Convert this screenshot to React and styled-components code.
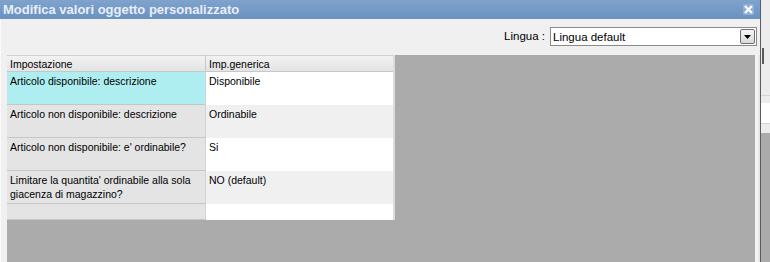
import React from "react";
import styled, { createGlobalStyle } from "styled-components";

const Global = createGlobalStyle`
  html, body { margin: 0; padding: 0; }
  body {
    width: 770px;
    height: 262px;
    overflow: hidden;
    background: #f0f0f0;
    font-family: "Liberation Sans", Arial, sans-serif;
    font-size: 11px;
    color: #000;
  }
`;

const Screen = styled.div`
  display: flex;
  width: 770px;
  height: 262px;
  overflow: hidden;
`;

const Dialog = styled.div`
  width: 760px;
  display: flex;
  flex-direction: column;
  border-right: 1px solid #5c5c5c;
  background: #f0f0f0;
`;

const TitleBar = styled.div`
  height: 19px;
  flex: none;
  display: flex;
  align-items: center;
  justify-content: space-between;
  padding: 0 6px 0 3px;
  background: linear-gradient(#7fa3cd, #6a91bf);
`;

const Title = styled.span`
  font-family: "Liberation Sans", Arial, sans-serif;
  font-size: 13px;
  font-weight: bold;
  color: #e9eff7;
  line-height: 19px;
`;

const CloseButton = styled.div`
  width: 11px;
  height: 11px;
  display: flex;
  align-items: center;
  justify-content: center;
  background: #8fb0d6;
`;

const Content = styled.div`
  flex: 1;
  display: flex;
  flex-direction: column;
  padding-left: 6px;
  border-left: 1px solid #fafafa;
`;

const Toolbar = styled.div`
  height: 36px;
  flex: none;
  display: flex;
  justify-content: flex-end;
  align-items: flex-start;
  gap: 5px;
  padding: 8px 3px 0 0;
  box-sizing: border-box;
`;

const Label = styled.span`
  line-height: 19px;
  font-size: 11.5px;
`;

const Select = styled.div`
  width: 207px;
  height: 19px;
  box-sizing: border-box;
  border: 1px solid #8a8a8a;
  background: #fff;
  display: flex;
  align-items: center;
  justify-content: space-between;
  padding: 0 1px 0 2px;
  font-size: 11.5px;
`;

const DropButton = styled.div`
  width: 15px;
  height: 15px;
  box-sizing: border-box;
  border: 1px solid #6f6f6f;
  border-radius: 2px;
  background: linear-gradient(#f6f6f6, #d9d9d9);
  display: flex;
  align-items: center;
  justify-content: center;
`;

const Body = styled.div`
  flex: 1;
  display: flex;
`;

const GridArea = styled.div`
  flex: 1;
  background: #ababab;
  display: flex;
  align-items: flex-start;
`;

const RightGutter = styled.div`
  width: 5px;
  background: linear-gradient(90deg, #f3f3f8 0, #f3f3f8 3px, #e6e6e6 3px);
`;

const Table = styled.div`
  display: grid;
  grid-template-columns: 199px 187px;
  grid-template-rows: 17px repeat(4, 33px) 16px;
  border-right: 2px solid #dcdcdc;
  font-size: 10.5px;
`;

const HeadCell = styled.div`
  box-sizing: border-box;
  background: linear-gradient(#f2f2f2, #e4e4e4);
  border-top: 1px solid #d0d0d0;
  border-bottom: 1px solid #c8c8c8;
  border-right: ${(p) => (p.$first ? "1px solid #c8c8c8" : "none")};
  padding: 1px 3px 0;
  line-height: 14px;
  white-space: nowrap;
`;

const KeyCell = styled.div`
  box-sizing: border-box;
  background: ${(p) => (p.$selected ? "#aeeef0" : "#e4e4e4")};
  border-bottom: 1px solid #c6c6c6;
  border-right: 1px solid #d2d2d2;
  padding: 2px 3px 0;
  line-height: 14px;
`;

const ValueCell = styled.div`
  box-sizing: border-box;
  background: ${(p) => (p.$alt ? "#f0f0f0" : "#ffffff")};
  padding: 2px 3px 0;
  line-height: 14px;
`;

const SideStrip = styled.div`
  flex: 1;
  display: flex;
  flex-direction: column;
  background: #ececec;
`;

const StripBlock = styled.div`
  height: ${(p) => p.$h}px;
  flex: ${(p) => (p.$grow ? 1 : "none")};
  background: ${(p) => p.$bg || "transparent"};
  border-bottom: ${(p) => (p.$line ? "1px solid #d4d4d4" : "none")};
  border-left: ${(p) => (p.$thumb ? "2px solid #5a5a5a" : "none")};
  margin-left: ${(p) => (p.$thumb ? "1px" : "0")};
`;

const rows = [
  { key: "Articolo disponibile: descrizione", value: "Disponibile" },
  { key: "Articolo non disponibile: descrizione", value: "Ordinabile" },
  { key: "Articolo non disponibile: e' ordinabile?", value: "Si" },
  {
    key: "Limitare la quantita' ordinabile alla sola giacenza di magazzino?",
    value: "NO (default)",
  },
  { key: "", value: "" },
];

export default function App() {
  return (
    <>
      <Global />
      <Screen>
        <Dialog>
          <TitleBar>
            <Title>Modifica valori oggetto personalizzato</Title>
            <CloseButton>
              <svg width="9" height="9" viewBox="0 0 9 9">
                <path d="M1 1 L8 8 M8 1 L1 8" stroke="#fff" strokeWidth="2.2" />
              </svg>
            </CloseButton>
          </TitleBar>
          <Content>
            <Toolbar>
              <Label>Lingua :</Label>
              <Select>
                <span>Lingua default</span>
                <DropButton>
                  <svg width="7" height="4" viewBox="0 0 7 4">
                    <path d="M0 0 H7 L3.5 4 Z" fill="#000" />
                  </svg>
                </DropButton>
              </Select>
            </Toolbar>
            <Body>
              <GridArea>
                <Table>
                  <HeadCell $first>Impostazione</HeadCell>
                  <HeadCell>Imp.generica</HeadCell>
                  {rows.map((r, i) => (
                    <React.Fragment key={i}>
                      <KeyCell $selected={i === 0}>{r.key}</KeyCell>
                      <ValueCell $alt={i % 2 === 1}>{r.value}</ValueCell>
                    </React.Fragment>
                  ))}
                </Table>
              </GridArea>
              <RightGutter />
            </Body>
          </Content>
        </Dialog>
        <SideStrip>
          <StripBlock $h={48} />
          <StripBlock $h={16} $thumb />
          <StripBlock $h={31} $line />
          <StripBlock $h={7} />
          <StripBlock $h={20} $bg="#ffffff" $line />
          <StripBlock $h={9} />
          <StripBlock $grow $bg="#ababab" />
        </SideStrip>
      </Screen>
    </>
  );
}
